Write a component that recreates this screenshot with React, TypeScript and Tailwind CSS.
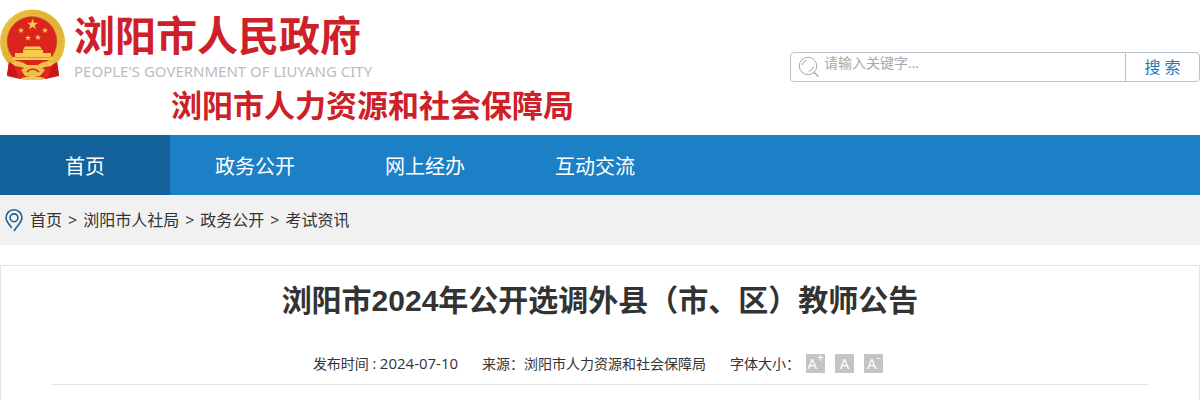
import { useState } from "react";

const navItems = ["首页", "政务公开", "网上经办", "互动交流"];
const crumbs = ["首页", "浏阳市人社局", "政务公开", "考试资讯"];

const STAR = "0,-1 0.24,-0.32 0.95,-0.31 0.38,0.12 0.59,0.81 0,0.4 -0.59,0.81 -0.38,0.12 -0.95,-0.31 -0.24,-0.32";

function Emblem() {
    return (
        <svg viewBox="0 0 66 72" className="h-[72px] w-[66px] shrink-0" aria-hidden="true">
            <defs>
                <linearGradient id="gold" x1="0" y1="0" x2="1" y2="1">
                    <stop offset="0" stopColor="#edc64a" />
                    <stop offset="0.5" stopColor="#e3b136" />
                    <stop offset="1" stopColor="#efc13e" />
                </linearGradient>
            </defs>
            <path d="M9 53 L7 68 L20 71 L46 71 L59 68 L57 53 Z" fill="#d8201f" />
            <circle cx="32.5" cy="34" r="32.5" fill="url(#gold)" />
            <circle cx="32.5" cy="34" r="29" fill="none" stroke="#c98e1c" strokeWidth="1" strokeDasharray="2 2" opacity="0.35" />
            <circle cx="32" cy="33.5" r="25" fill="#dc241e" stroke="#b87912" strokeWidth="0.6" />
            <g fill="#f5ca4c">
                <polygon points={STAR} transform="translate(32.5 16.5) scale(5.8)" />
                <polygon points={STAR} transform="translate(21 22.5) scale(3.2)" />
                <polygon points={STAR} transform="translate(45 22.5) scale(3.2)" />
                <polygon points={STAR} transform="translate(28 30) scale(3.2)" />
                <polygon points={STAR} transform="translate(38 29.5) scale(3.2)" />
                <path d="M25 38.5 h15 l2 3 h-19 z M23 42 h20 v3 h8 v4 h2 v3 H13 v-3 h2 v-4 h8 z" />
            </g>
            <path d="M15 49.5 H51" stroke="#d08b20" strokeWidth="0.7" />
            <path d="M11 56 C17 51 22 54 27 57 L38 57 C43 53 49 52 55 56 L52 61 L39 61 L27 61 L14 61 Z" fill="#f2c54a" />
            <path d="M10 57 L21 59 L27 61 L39 61 L45 59 L56 57 L50 70 L39 66 L27 66 L16 70 Z" fill="#dc2a20" />
            <path d="M21 62 L27 58 L32.5 61 L39 58 L45 62 L40 68 L25 68 Z" fill="#efbf43" />
            <path d="M27 64 Q32.5 58 39 64" stroke="#d52920" strokeWidth="1.4" fill="none" />
            <path d="M9 54 L14 57 L18 70 L7 67 Z M57 54 L52 57 L48 70 L59 67 Z" fill="#c91619" />
            <path d="M21 70 L32 67.5 L45 70 L43 72 H23 Z" fill="#f0c85b" />
        </svg>
    );
}

function SearchIcon() {
    return (
        <svg viewBox="0 0 22 22" className="h-[22px] w-[22px] shrink-0" fill="none" stroke="#a9a9a9" aria-hidden="true">
            <circle cx="10" cy="10" r="8.7" />
            <path d="M4.2 9 A6 6 0 0 1 8.5 4.3 M15.5 10.5 A6 6 0 0 1 10.5 15.3" />
            <path d="M15.7 16.3 L20.5 20.5" strokeWidth="1.5" />
        </svg>
    );
}

function PinIcon() {
    return (
        <svg viewBox="0 0 18 23" className="h-[23px] w-[18px] shrink-0" fill="none" stroke="#225b98" strokeWidth="1.6" aria-hidden="true">
            <path d="M6.8 18.8 C3.5 15 1 12.2 1 8.8 A8 8 0 0 1 17 8.8 C17 13.3 11.5 17.5 9 22" />
            <circle cx="9" cy="8.8" r="3.9" />
        </svg>
    );
}

function Header() {
    const [keyword, setKeyword] = useState("");

    return (
        <header className="flex items-start justify-between pt-2">
            <div>
                <a href="#" className="flex">
                    <Emblem />
                    <span className="ml-2">
                        <span className="block pt-1 font-['Liberation_Sans','Noto_Sans_CJK_SC',sans-serif] text-[41px] leading-[50px] font-bold text-[#ce2029]">
                            浏阳市人民政府
                        </span>
                        <span className="block font-['Noto_Sans',sans-serif] text-[15px] leading-[18px] text-[#bdbdbd]">
                            PEOPLE'S GOVERNMENT OF LIUYANG CITY
                        </span>
                    </span>
                </a>
                <h2 className="ml-[171px] pt-1 pb-2 text-[31px] leading-[43px] font-bold text-[#ce2029]">浏阳市人力资源和社会保障局</h2>
            </div>
            <form
                className="mt-11 flex h-[30px] w-[410px] rounded-[4px] border border-[#b8c4cc]"
                onSubmit={(e) => e.preventDefault()}
            >
                <label htmlFor="keyword" className="flex items-center pl-[7px]" aria-label="请输入关键字">
                    <SearchIcon />
                </label>
                <input
                    id="keyword"
                    value={keyword}
                    onChange={(e) => setKeyword(e.target.value)}
                    placeholder="请输入关键字..."
                    className="min-w-0 flex-1 self-start px-1 text-sm leading-5 text-[#666] outline-none placeholder:text-[#a9a9a9]"
                />
                <button type="submit" className="w-[74px] border-l border-[#b8c4cc] text-base leading-7 text-[#1c7ab8]">
                    搜 索
                </button>
            </form>
        </header>
    );
}

export default function App() {
    const [fontSize, setFontSize] = useState(16);

    return (
        <div className="bg-white font-['Open_Sans','Noto_Sans_CJK_SC',sans-serif] text-[#333]">
            <Header />
            <nav className="flex bg-[#1c80c7]">
                {navItems.map((item, i) => (
                    <a
                        key={item}
                        href="#"
                        className={`h-[60px] w-[170px] pt-1 text-center text-xl leading-[56px] text-white ${i === 0 ? "bg-[#13629b]" : ""}`}
                    >
                        {item}
                    </a>
                ))}
            </nav>
            <div className="flex h-[50px] items-center bg-[#f1f1f1] pl-[5px] text-base">
                <PinIcon />
                <ol className="ml-[7px] flex gap-[6px]">
                    {crumbs.map((c, i) => (
                        <li key={c} className="flex gap-[6px]">
                            {i > 0 && <span>&gt;</span>}
                            <a href="#">{c}</a>
                        </li>
                    ))}
                </ol>
            </div>
            <main className="mt-5 border border-b-0 border-[#e3e3e3] px-[50px] pt-3">
                <h1 className="text-center font-['Liberation_Sans','Noto_Sans_CJK_SC',sans-serif] text-[30px] leading-[45px] font-bold">
                    浏阳市2024年公开选调外县（市、区）教师公告
                </h1>
                <div className="mt-5 flex h-[42px] items-center justify-center border-b border-[#e3e3e3] pr-1 text-sm">
                    <span>
                        发布时间 : <time className="text-[15px]">2024-07-10</time>
                    </span>
                    <span className="ml-6">来源：浏阳市人力资源和社会保障局</span>
                    <span className="ml-6">字体大小：</span>
                    <div className="ml-[6px] flex gap-[10px] text-[15px] text-white">
                        <button
                            className="flex h-[19px] w-[19px] items-center justify-center bg-[#c4c4c4] leading-none"
                            onClick={() => setFontSize(fontSize + 2)}
                        >
                            A<sup className="text-[12px]">+</sup>
                        </button>
                        <button
                            className="flex h-[19px] w-[19px] items-center justify-center bg-[#c4c4c4] leading-none"
                            onClick={() => setFontSize(16)}
                        >
                            A
                        </button>
                        <button
                            className="flex h-[19px] w-[19px] items-center justify-center bg-[#c4c4c4] leading-none"
                            onClick={() => setFontSize(fontSize - 2)}
                        >
                            A<sup className="text-[12px]">-</sup>
                        </button>
                    </div>
                </div>
                <article className="h-[15px]" style={{ fontSize }} />
            </main>
        </div>
    );
}
